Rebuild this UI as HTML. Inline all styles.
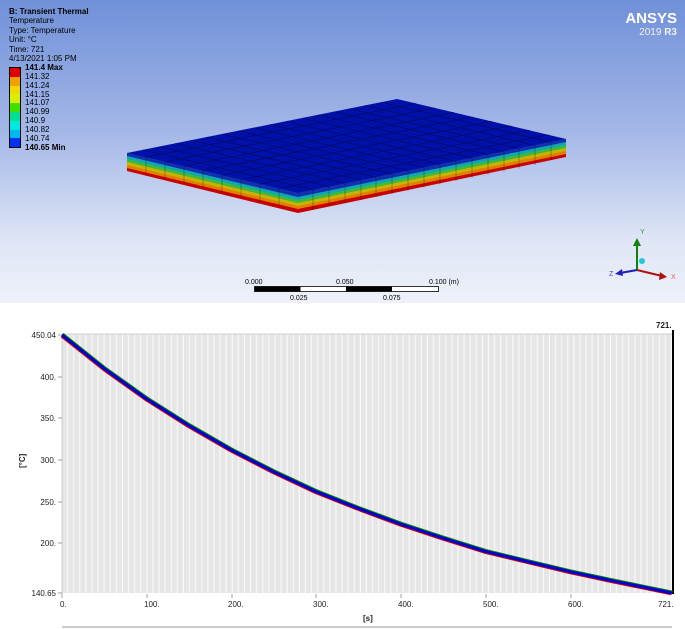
<!DOCTYPE html>
<html><head><meta charset="utf-8"><style>
body{margin:0;width:685px;height:629px;overflow:hidden;background:#fff;font-family:"Liberation Sans",sans-serif;position:relative}
.top{position:absolute;left:0;top:0;width:685px;height:303px;background:linear-gradient(#7090d8 0%,#a6b9e8 45%,#dfe6f6 80%,#eef1fa 100%)}
.t{position:absolute;font-size:8px;color:#000;line-height:9.4px}
</style></head><body>
<div class="top"></div>
<div class="t" style="left:9px;top:7px"><b>B: Transient Thermal</b><br>Temperature<br>Type: Temperature<br>Unit: °C<br>Time: 721<br>4/13/2021 1:05 PM</div>
<div style="position:absolute;left:9px;top:67px;width:10px;border:1px solid #000">
<div style="height:8.8px;background:#e00000"></div><div style="height:8.8px;background:#f0a000"></div><div style="height:8.8px;background:#f0d800"></div><div style="height:8.8px;background:#d8f000"></div><div style="height:8.8px;background:#40e000"></div><div style="height:8.8px;background:#00e090"></div><div style="height:8.8px;background:#00e8e0"></div><div style="height:8.8px;background:#00b8f0"></div><div style="height:8.8px;background:#0030f0"></div></div>
<div class="t" style="left:25px;top:64px;line-height:8.85px"><b>141.4 Max</b><br>141.32<br>141.24<br>141.15<br>141.07<br>140.99<br>140.9<br>140.82<br>140.74<br><b>140.65 Min</b></div>
<div style="position:absolute;right:8px;top:12px;color:#fff;text-align:right;font-weight:bold;font-size:15px;line-height:14px">ANSYS<div style="font-size:10px;font-weight:normal;color:#f0f0f0">2019 <b>R3</b></div></div>
<svg width="685" height="629" style="position:absolute;left:0;top:0">
<g>
<polygon points="127,153 298,193 298,213 127,171" fill="#c80000"/>
<polygon points="298,193 566,139 566,157 298,213" fill="#c80000"/>
<polygon points="127,153 298,193 298,209 127,168" fill="#e08000"/>
<polygon points="298,193 566,139 566,154 298,209" fill="#e08000"/>
<polygon points="127,153 298,193 298,206 127,165" fill="#c8b400"/>
<polygon points="298,193 566,139 566,151 298,206" fill="#c8b400"/>
<polygon points="127,153 298,193 298,203 127,162" fill="#40b840"/>
<polygon points="298,193 566,139 566,148 298,203" fill="#40b840"/>
<polygon points="127,153 298,193 298,200 127,159" fill="#10a8b0"/>
<polygon points="298,193 566,139 566,145 298,200" fill="#10a8b0"/>
<polygon points="127,153 298,193 298,197 127,156" fill="#1030b0"/>
<polygon points="298,193 566,139 566,142 298,197" fill="#1030b0"/>
</g>
<polygon points="127,153 397,99 566,139 298,193" fill="#0010a8"/>
<g stroke="#000" stroke-width=".5" opacity=".55">
<line x1="146" y1="157.4" x2="416" y2="103.4"/><line x1="165" y1="161.9" x2="435" y2="107.9"/><line x1="184" y1="166.3" x2="454" y2="112.3"/><line x1="203" y1="170.8" x2="473" y2="116.8"/><line x1="222" y1="175.2" x2="492" y2="121.2"/><line x1="241" y1="179.7" x2="511" y2="125.7"/><line x1="260" y1="184.1" x2="530" y2="130.1"/><line x1="279" y1="188.6" x2="549" y2="134.6"/>
<line x1="143" y1="149.8" x2="313" y2="189.8"/><line x1="159" y1="146.6" x2="329" y2="186.6"/><line x1="175" y1="143.4" x2="345" y2="183.4"/><line x1="191" y1="140.2" x2="361" y2="180.2"/><line x1="206" y1="137.1" x2="376" y2="177.1"/><line x1="222" y1="134" x2="392" y2="174"/><line x1="238" y1="130.8" x2="408" y2="170.8"/><line x1="254" y1="127.6" x2="424" y2="167.6"/><line x1="270" y1="124.4" x2="440" y2="164.4"/><line x1="286" y1="121.3" x2="456" y2="161.3"/><line x1="302" y1="118" x2="472" y2="158"/><line x1="318" y1="114.8" x2="488" y2="154.8"/><line x1="334" y1="111.6" x2="504" y2="151.6"/><line x1="349" y1="108.6" x2="519" y2="148.6"/><line x1="365" y1="105.4" x2="535" y2="145.4"/><line x1="381" y1="102.2" x2="551" y2="142.2"/>
<line x1="146" y1="157.4" x2="146" y2="174.4"/><line x1="165" y1="161.9" x2="165" y2="178.9"/><line x1="184" y1="166.3" x2="184" y2="183.3"/><line x1="203" y1="170.8" x2="203" y2="187.8"/><line x1="222" y1="175.2" x2="222" y2="192.2"/><line x1="241" y1="179.7" x2="241" y2="196.7"/><line x1="260" y1="184.1" x2="260" y2="201.1"/><line x1="279" y1="188.6" x2="279" y2="205.6"/>
<line x1="313" y1="189.8" x2="313" y2="209.8"/><line x1="329" y1="186.6" x2="329" y2="206.6"/><line x1="345" y1="183.4" x2="345" y2="203.4"/><line x1="361" y1="180.2" x2="361" y2="200.2"/><line x1="376" y1="177.1" x2="376" y2="197"/><line x1="392" y1="174" x2="392" y2="194"/><line x1="408" y1="170.8" x2="408" y2="190.8"/><line x1="424" y1="167.6" x2="424" y2="187.6"/><line x1="440" y1="164.4" x2="440" y2="184.4"/><line x1="456" y1="161.3" x2="456" y2="181"/><line x1="472" y1="158" x2="472" y2="178"/><line x1="488" y1="154.8" x2="488" y2="174.8"/><line x1="504" y1="151.6" x2="504" y2="171.6"/><line x1="519" y1="148.6" x2="519" y2="168.6"/><line x1="535" y1="145.4" x2="535" y2="165"/><line x1="551" y1="142.2" x2="551" y2="160"/>
</g>
<rect x="254.5" y="286.5" width="184" height="5" fill="#fff" stroke="#000" stroke-width=".8"/>
<rect x="254.5" y="286.5" width="46" height="5" fill="#000"/><rect x="346" y="286.5" width="46" height="5" fill="#000"/>
<g font-size="7" font-family="Liberation Sans"><text x="245" y="284">0.000</text><text x="336" y="284">0.050</text><text x="429" y="284">0.100 (m)</text><text x="290" y="300">0.025</text><text x="383" y="300">0.075</text></g>
<line x1="637" y1="270" x2="637" y2="245" stroke="#108010" stroke-width="2"/><polygon points="633,246 641,246 637,238" fill="#108010"/>
<line x1="637" y1="270" x2="662" y2="276" stroke="#b01010" stroke-width="2"/><polygon points="660,272 667,277 659,280" fill="#b01010"/>
<line x1="637" y1="270" x2="620" y2="273" stroke="#2020c0" stroke-width="2"/><polygon points="622,269 615,274 623,276" fill="#2020c0"/>
<circle cx="642" cy="261" r="3" fill="#20c8d8"/>
<g font-size="7" font-family="Liberation Sans"><text x="640" y="234" fill="#30a030">Y</text><text x="671" y="279" fill="#e06060">X</text><text x="609" y="276" fill="#5050c0">Z</text></g>
<defs><pattern id="st" width="6.1" height="10" patternUnits="userSpaceOnUse" x="62"><rect width="6.1" height="10" fill="#e6e6e6"/><rect x="5" width="1.1" height="10" fill="#fafafa"/></pattern></defs>
<rect x="62" y="334" width="611" height="259" fill="url(#st)"/>
<line x1="62" y1="334" x2="673" y2="334" stroke="#d0d0d0"/>
<line x1="673" y1="330" x2="673" y2="594" stroke="#000" stroke-width="2"/>
<line x1="62" y1="334" x2="62" y2="594" stroke="#ccc"/>
<g fill="none" stroke-linejoin="round">
<polyline stroke="#d00000" stroke-width="2" transform="translate(-.8,1.3)" points="62,335 104.3,368.7 146.6,398.9 188.9,425.6 231.2,449.9 273.5,471.7 315.8,491.5 358.1,508.3 400.4,524 442.7,538 485,551.3 527.3,561.5 569.6,571.6 611.9,580.7 672,593"/>
<polyline stroke="#008000" stroke-width="2" transform="translate(.8,-1.3)" points="62,335 104.3,368.7 146.6,398.9 188.9,425.6 231.2,449.9 273.5,471.7 315.8,491.5 358.1,508.3 400.4,524 442.7,538 485,551.3 527.3,561.5 569.6,571.6 611.9,580.7 672,593"/>
<polyline stroke="#0000d0" stroke-width="3" points="62,335 104.3,368.7 146.6,398.9 188.9,425.6 231.2,449.9 273.5,471.7 315.8,491.5 358.1,508.3 400.4,524 442.7,538 485,551.3 527.3,561.5 569.6,571.6 611.9,580.7 672,593"/>
</g>
<g stroke="#888" stroke-width=".8"><line x1="58" y1="335" x2="62" y2="335"/><line x1="58" y1="377" x2="62" y2="377"/><line x1="58" y1="418" x2="62" y2="418"/><line x1="58" y1="460" x2="62" y2="460"/><line x1="58" y1="502" x2="62" y2="502"/><line x1="58" y1="543" x2="62" y2="543"/><line x1="58" y1="593" x2="62" y2="593"/>
<line x1="62" y1="594" x2="62" y2="598"/><line x1="147" y1="594" x2="147" y2="598"/><line x1="232" y1="594" x2="232" y2="598"/><line x1="316" y1="594" x2="316" y2="598"/><line x1="401" y1="594" x2="401" y2="598"/><line x1="486" y1="594" x2="486" y2="598"/><line x1="571" y1="594" x2="571" y2="598"/></g>
<g font-size="8" font-family="Liberation Sans" fill="#222" text-anchor="end"><text x="56" y="338">450.04</text><text x="56" y="380">400.</text><text x="56" y="421">350.</text><text x="56" y="463">300.</text><text x="56" y="505">250.</text><text x="56" y="546">200.</text><text x="56" y="596">140.65</text></g>
<g font-size="8" font-family="Liberation Sans" fill="#222"><text x="60" y="607">0.</text><text x="144" y="607">100.</text><text x="228" y="607">200.</text><text x="313" y="607">300.</text><text x="398" y="607">400.</text><text x="483" y="607">500.</text><text x="568" y="607">600.</text><text x="658" y="607">721.</text>
<text x="363" y="621" font-weight="bold">[s]</text><text x="656" y="328" font-weight="bold">721.</text>
<text x="0" y="0" font-weight="bold" transform="translate(25,468) rotate(-90)">[°C]</text></g>
<line x1="62" y1="627" x2="672" y2="627" stroke="#aaa" stroke-width="1.2"/>
</svg>
</body></html>
